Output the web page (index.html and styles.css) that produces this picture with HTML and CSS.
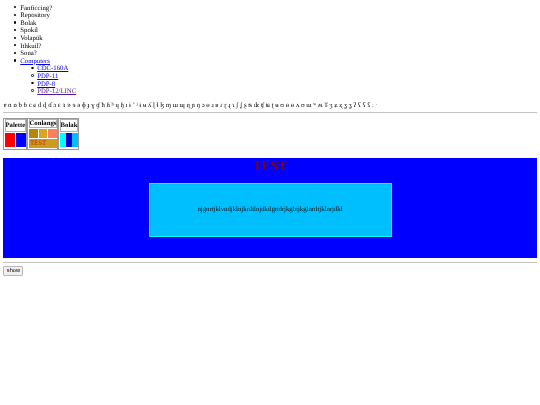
FILE: index.html
```html
<!DOCTYPE html>
<html>
<head>
<meta charset="utf-8">
<title>Conlangs</title>
<link rel="stylesheet" href="styles.css">
</head>
<body>
<ul class="topics">
  <li>Fanficcing?</li>
  <li>Repository</li>
  <li>Bolak</li>
  <li>Spokil</li>
  <li>Volapük</li>
  <li>Ithkuil?</li>
  <li>Sona?</li>
  <li><a href="#computers">Computers</a>
    <ul class="sub">
      <li><a href="#cdc">CDC-160A</a></li>
      <li><a href="#pdp11">PDP-11</a></li>
      <li><a href="#pdp8">PDP-8</a></li>
      <li><a class="visited" href="#pdp12">PDP-12/LINC</a></li>
    </ul>
  </li>
</ul>
<p class="ipa">ɐ ɑ ɒ b ɓ c ɕ d ɖ ɗ ɔ ɛ ɜ ɝ ɘ ə ɸ ɟ ɣ ɠ ħ ɦ ʰ ɥ ɧ ɪ ɨ ʼ ʲ ɨ ʉ ʎ ɭ ɬ ɮ ɱ ɯ ɰ ɳ ɲ ŋ ɔ ɵ ɹ ʁ ɾ ɽ ɻ ɿ ʃ ʆ ʂ ʦ ʣ ʧ ʨ ʈ ʉ ʊ ɵ ɵ ʌ ʊ ɯ ʷ ʍ ʬ ʒ ʑ ʐ ʓ ʓ ʔ ʕ ʕ ʕ ː ˑ</p>
<hr>
<div class="palettes">
  <div class="palette two">
    <div class="head">Palette</div>
    <div class="swatch red"></div>
    <div class="swatch blue"></div>
  </div>
  <div class="palette three">
    <div class="head small">Conlangs</div>
    <div class="chip dark"></div>
    <div class="chip gold"></div>
    <div class="chip coral"></div>
    <div class="test">TEST</div>
  </div>
  <div class="palette bolak">
    <div class="head">Bolak</div>
    <div class="swatch aqua"></div>
    <div class="swatch navy"></div>
    <div class="swatch sky"></div>
  </div>
</div>
<div class="stage">
  <h1>TEST</h1>
  <div class="panel">njgnrtjklvndjklnjkrdtlnjdktlgndrjkglnjkglnrdtjklnrjdkl</div>
</div>
<hr class="lower">
<button type="button">show</button>
</body>
</html>
```
FILE: styles.css
```css
html, body { height: 100%; }
body { margin: 0; padding: 3.4px; box-sizing: border-box; background: #fff; color: #000; font-family: "Liberation Serif", "DejaVu Serif", serif; font-size: 6.75px; line-height: 7.6px; text-rendering: geometricPrecision; filter: blur(0.3px); overflow: hidden; }
a { color: #0000ee; }
a.visited { color: #551a8b; }
ul { margin: 0; padding-left: 16.9px; list-style: none; }
li::before { content: ""; display: inline-block; box-sizing: border-box; width: 2.2px; height: 2.2px; margin-left: -6px; margin-right: 3.8px; border-radius: 50%; background: #000; vertical-align: 1.2px; }
.sub li::before { background: transparent; border: 0.5px solid #000; width: 2.6px; height: 2.6px; margin-right: 3.4px; }
.topics { margin-bottom: 6.75px; padding-top: 1.2px; }
.ipa { margin: 0 0 -1.2px; }
hr { margin: 3.4px 0; border: 0; border-top: 1px solid #c4c4c4; }
.palettes { display: flex; align-items: stretch; height: 32px; margin-top: 4.5px; }
.palette { display: grid; gap: 1px; padding: 0.5px; border: 1px solid #999; box-sizing: border-box; }
.two { grid-template-columns: 10px 10px; grid-template-rows: 13px 14px; width: 24px; }
.three { grid-template-columns: repeat(3, 8.7px); grid-template-rows: 9px 9px 9px; width: 31.1px; }
.bolak { grid-template-columns: repeat(3, 5.6px); grid-template-rows: 13px 14px; gap: 1px 0.6px; width: 21px; }
.head { grid-column: 1 / -1; border: 1px solid #b0b0b0; background: #fff; font-weight: bold; display: flex; align-items: center; justify-content: center; white-space: nowrap; }
.red { background: #ff0000; }
.blue { background: #0000ff; }
.aqua { background: #00ffff; }
.navy { background: #0000cd; }
.sky { background: #00bfff; }
.dark { background: #b8860b; }
.gold { background: #daa520; }
.coral { background: #fa8060; }
.test { grid-column: 1 / -1; background: #cd9b1d; color: #b03000; padding-left: 1px; display: flex; align-items: center; }
.stage { height: 100px; margin-top: 8.5px; background: #0000ff; display: flex; flex-direction: column; align-items: center; }
.stage h1 { margin: 0; color: #800000; font-size: 13.5px; line-height: 15.6px; font-weight: bold; }
.panel { width: 243px; height: 54px; margin-top: 9px; box-sizing: border-box; background: #00bfff; border: 1px solid #00ffff; display: flex; align-items: center; justify-content: center; color: #111; }
.lower { margin-top: 3.4px; }
button { display: block; width: 20px; height: 9.5px; padding: 0; font-family: "Liberation Sans", sans-serif; font-size: 5.6px; line-height: 7px; background: #efefef; border: 1px solid #b8b8b8; border-radius: 1px; color: #000; }
```
